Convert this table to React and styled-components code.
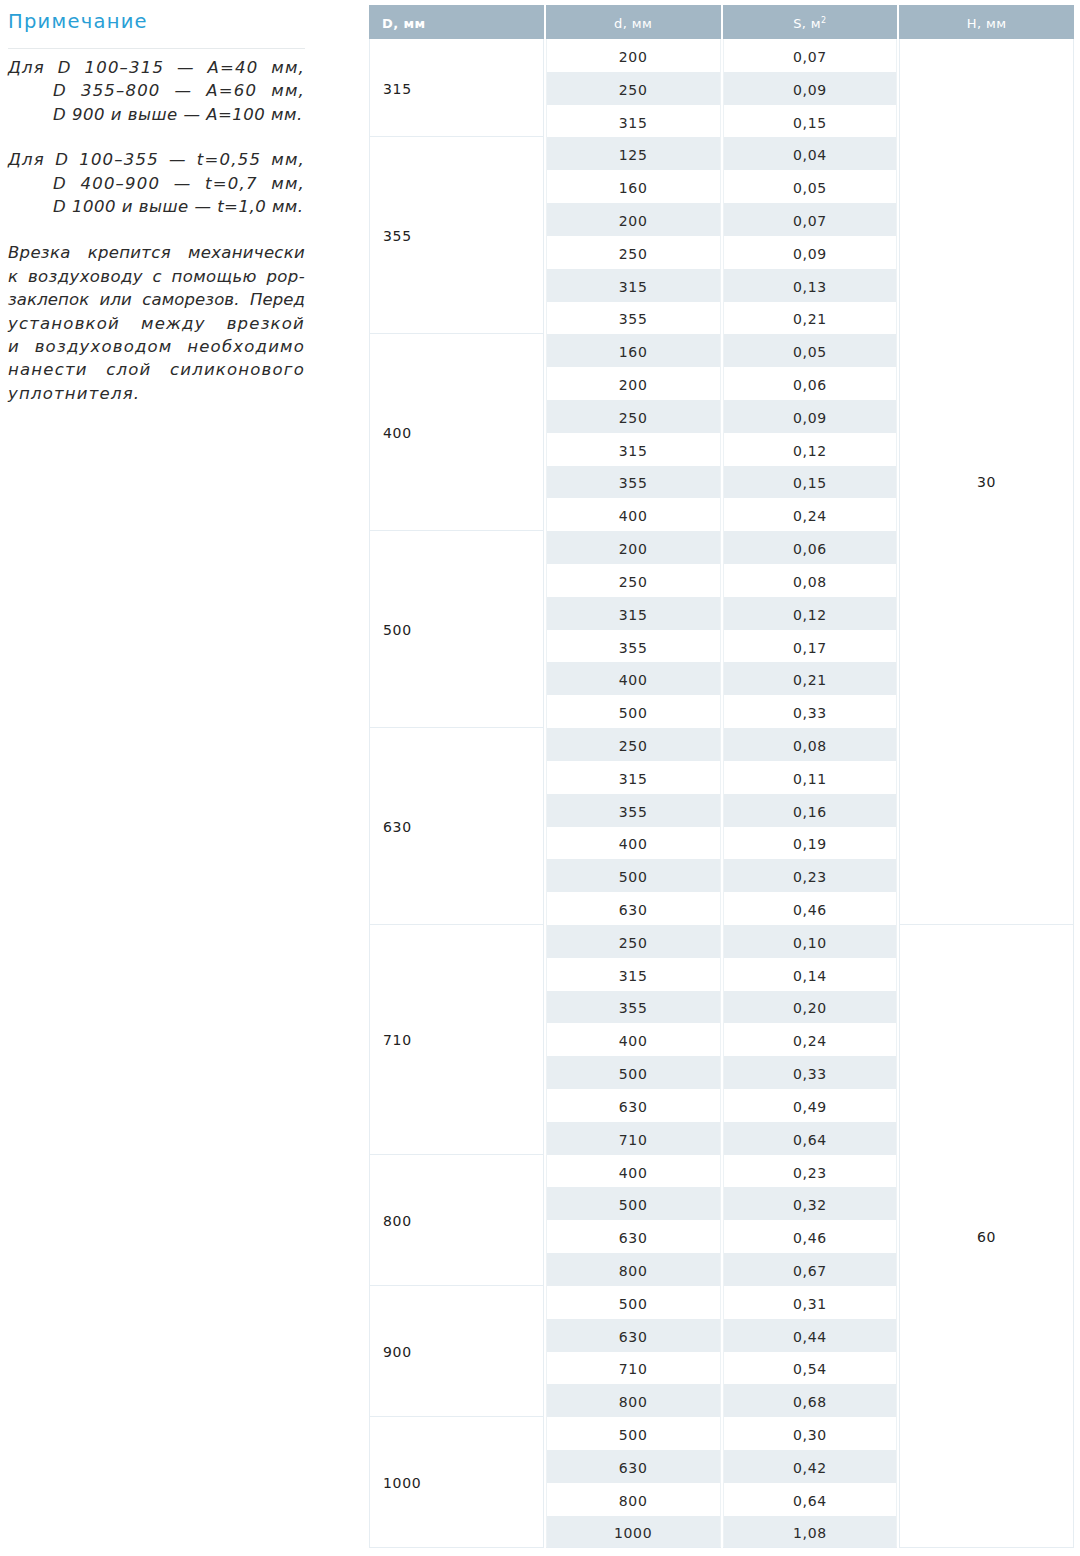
import React from "react";
import styled, { createGlobalStyle } from "styled-components";

const Global = createGlobalStyle`
  html, body { margin: 0; padding: 0; background: #fff; }
  body { font-family: "DejaVu Sans", "Noto Sans", sans-serif; color: #2b2b2b; }
`;

const Page = styled.div`
  display: flex;
  align-items: flex-start;
  gap: 64px;
  padding: 5px 6px 0 8px;
  width: 1080px;
  box-sizing: border-box;
`;

const Notes = styled.aside`
  width: 297px;
  flex: none;
  display: flex;
  flex-direction: column;
`;

const Title = styled.h2`
  margin: 0;
  font-weight: 400;
  font-size: 19.5px;
  letter-spacing: 1.25px;
  line-height: 34px;
  color: #2a9fd6;
  padding-bottom: 9px;
  border-bottom: 1px solid #e6eaec;
`;

const NoteBlock = styled.div`
  display: flex;
  flex-direction: column;
  margin-top: ${(p) => p.$top}px;
`;

const Line = styled.div`
  font-style: italic;
  font-size: 16.5px;
  line-height: 23.4px;
  color: #2b2b2b;
  white-space: nowrap;
  padding-left: ${(p) => (p.$indent ? 45 : 0)}px;
  text-align: ${(p) => (p.$justify ? "justify" : "left")};
  text-align-last: ${(p) => (p.$justify ? "justify" : "left")};
  letter-spacing: ${(p) => p.$ls ?? 1.2}px;
`;

const Grid = styled.div`
  width: 705px;
  flex: none;
  display: grid;
  grid-template-columns: repeat(4, 1fr);
  grid-template-rows: 34px repeat(46, 32.826px);
  column-gap: 2px;
`;

const Head = styled.div`
  grid-row: 1;
  background: #a3b7c5;
  color: #fff;
  font-size: 13px;
  letter-spacing: 0.4px;
  font-weight: ${(p) => (p.$bold ? 700 : 400)};
  display: flex;
  align-items: center;
  justify-content: ${(p) => (p.$left ? "flex-start" : "center")};
  padding-left: ${(p) => (p.$left ? 13 : 0)}px;
  padding-top: 3px;
  sup { font-size: 8px; margin-top: -6px; }
`;

const GroupCell = styled.div`
  grid-column: ${(p) => p.$col};
  grid-row: ${(p) => p.$row} / span ${(p) => p.$span};
  display: flex;
  align-items: center;
  justify-content: ${(p) => (p.$center ? "center" : "flex-start")};
  padding-left: ${(p) => (p.$center ? 0 : 13)}px;
  padding-top: 2px;
  border-left: 1px solid #e6edf2;
  border-right: 1px solid #e6edf2;
  border-bottom: 1px solid #e6edf2;
  font-size: 14px;
  letter-spacing: 0.7px;
  font-weight: ${(p) => (p.$center ? 400 : 500)};
  color: #222;
`;

const DataCell = styled.div`
  grid-column: ${(p) => p.$col};
  grid-row: ${(p) => p.$row};
  display: flex;
  align-items: center;
  justify-content: center;
  background: ${(p) => (p.$stripe ? "#e8eef2" : "#fff")};
  box-shadow: inset 1px 0 #edf2f5, inset -1px 0 #edf2f5;
  border-bottom: ${(p) => (p.$last ? "1px solid #e6edf2" : "none")};
  font-size: 14px;
  letter-spacing: 0.7px;
  color: #2b2b2b;
  padding-top: 3px;
  box-sizing: border-box;
`;

const groups = [
  ["315", [["200", "0,07"], ["250", "0,09"], ["315", "0,15"]]],
  ["355", [["125", "0,04"], ["160", "0,05"], ["200", "0,07"], ["250", "0,09"], ["315", "0,13"], ["355", "0,21"]]],
  ["400", [["160", "0,05"], ["200", "0,06"], ["250", "0,09"], ["315", "0,12"], ["355", "0,15"], ["400", "0,24"]]],
  ["500", [["200", "0,06"], ["250", "0,08"], ["315", "0,12"], ["355", "0,17"], ["400", "0,21"], ["500", "0,33"]]],
  ["630", [["250", "0,08"], ["315", "0,11"], ["355", "0,16"], ["400", "0,19"], ["500", "0,23"], ["630", "0,46"]]],
  ["710", [["250", "0,10"], ["315", "0,14"], ["355", "0,20"], ["400", "0,24"], ["500", "0,33"], ["630", "0,49"], ["710", "0,64"]]],
  ["800", [["400", "0,23"], ["500", "0,32"], ["630", "0,46"], ["800", "0,67"]]],
  ["900", [["500", "0,31"], ["630", "0,44"], ["710", "0,54"], ["800", "0,68"]]],
  ["1000", [["500", "0,30"], ["630", "0,42"], ["800", "0,64"], ["1000", "1,08"]]],
];

const heights = [
  { value: "30", from: 0, span: 27 },
  { value: "60", from: 27, span: 19 },
];

export default function App() {
  const cells = [];
  let idx = 0;
  const total = groups.reduce((s, g) => s + g[1].length, 0);
  groups.forEach(([D, rows]) => {
    const start = idx + 2;
    cells.push(
      <GroupCell key={"D" + D} $col={1} $row={start} $span={rows.length}>
        {D}
      </GroupCell>
    );
    rows.forEach(([d, s]) => {
      const r = idx + 2;
      const stripe = idx % 2 === 1;
      const last = idx === total - 1;
      cells.push(
        <DataCell key={"d" + idx} $col={2} $row={r} $stripe={stripe} $last={last}>
          {d}
        </DataCell>,
        <DataCell key={"s" + idx} $col={3} $row={r} $stripe={stripe} $last={last}>
          {s}
        </DataCell>
      );
      idx += 1;
    });
  });

  return (
    <>
      <Global />
      <Page>
        <Notes>
          <Title>Примечание</Title>
          <NoteBlock $top={7}>
            <Line $justify>Для D 100–315 — A=40 мм,</Line>
            <Line $justify $indent>D 355–800 — A=60 мм,</Line>
            <Line $indent $ls={0.5}>D 900 и выше — A=100 мм.</Line>
          </NoteBlock>
          <NoteBlock $top={22}>
            <Line $justify>Для D 100–355 — t=0,55 мм,</Line>
            <Line $justify $indent>D 400–900 — t=0,7 мм,</Line>
            <Line $indent $ls={0.5}>D 1000 и выше — t=1,0 мм.</Line>
          </NoteBlock>
          <NoteBlock $top={23}>
            <Line $justify $ls={0.3}>Врезка крепится механически</Line>
            <Line $justify $ls={0.4}>к воздуховоду с помощью рор-</Line>
            <Line $justify $ls={0.1}>заклепок или саморезов. Перед</Line>
            <Line $justify>установкой между врезкой</Line>
            <Line $justify>и воздуховодом необходимо</Line>
            <Line $justify>нанести слой силиконового</Line>
            <Line>уплотнителя.</Line>
          </NoteBlock>
        </Notes>
        <Grid>
          <Head $left $bold>D, мм</Head>
          <Head>d, мм</Head>
          <Head>
            S, м<sup>2</sup>
          </Head>
          <Head>H, мм</Head>
          {cells}
          {heights.map((h) => (
            <GroupCell key={"H" + h.value} $col={4} $row={h.from + 2} $span={h.span} $center>
              {h.value}
            </GroupCell>
          ))}
        </Grid>
      </Page>
    </>
  );
}
